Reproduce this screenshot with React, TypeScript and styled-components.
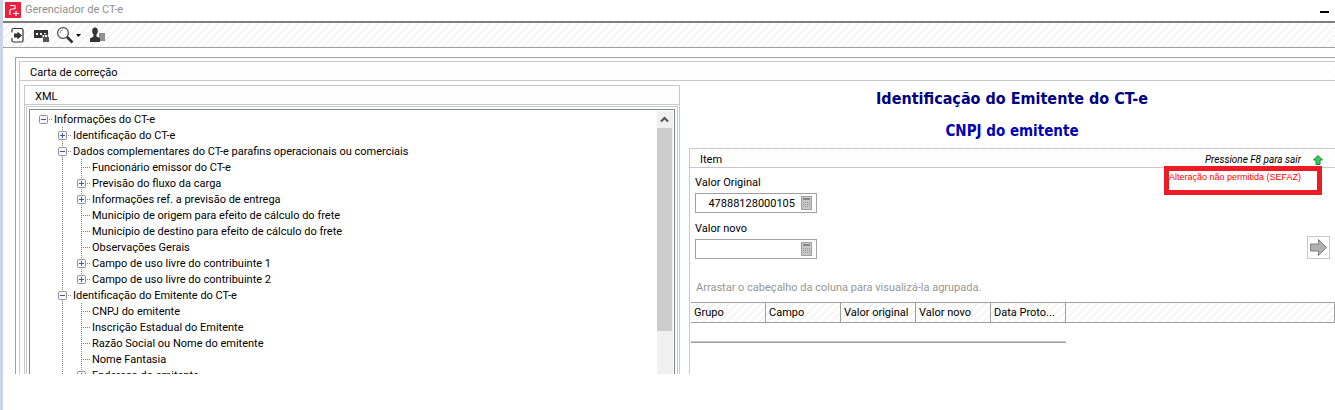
import React from 'react';
import styled, { createGlobalStyle, css } from 'styled-components';

const GlobalStyle = createGlobalStyle`
  *, *::before, *::after { box-sizing: border-box; }
  body { margin: 0; background: #fff; color: #000; }
  body, button, input, table { font-family: Roboto, "Liberation Sans", sans-serif; font-size: 11px; line-height: 16px; }
`;

const hatch = (color: string) => css`
  background-color: #fff;
  background-image: linear-gradient(135deg, transparent 44%, ${color} 44% 56%, transparent 56%);
  background-size: 8px 8px;
`;

const Window = styled.div`
  height: 100vh;
  display: flex;
  flex-direction: column;
  overflow: hidden;
  padding-bottom: 36px;
  border-left: 3px solid #ccd5e8;
`;

const TitleBar = styled.header`
  flex: none;
  height: 21px;
  display: flex;
  align-items: center;
  gap: 4px;
  padding: 0 6px 2px 2px;
`;

const WindowTitle = styled.h1`
  flex: 1;
  margin: 0;
  font-size: 11px;
  line-height: 16px;
  font-weight: 400;
  color: #8f8f8f;
`;

const MinimizeButton = styled.button`
  width: 9px;
  height: 16px;
  padding: 5px 0 0;
  border: 0;
  background: none;
  display: flex;
  align-items: center;
`;

const Toolbar = styled.div`
  flex: none;
  height: 27px;
  display: flex;
  align-items: center;
  gap: 7px;
  padding: 0 6px;
  border-top: 2px solid #7d7d7d;
  border-bottom: 1px solid #a0a0a0;
  ${hatch('#e9e9e9')}
`;

const ToolButton = styled.button<{ $wide?: boolean }>`
  width: ${p => (p.$wide ? 26 : 17)}px;
  height: 17px;
  padding: 0;
  border: 0;
  background: none;
  display: flex;
  align-items: center;
`;

const Workspace = styled.main`
  flex: 1;
  min-height: 0;
  display: flex;
  margin: 9px 0 0 12px;
  padding: 3px 0 0 3px;
  border-top: 1px solid #a0a0a0;
  border-left: 1px solid #a0a0a0;
`;

const CorrectionPanel = styled.section`
  flex: 1;
  min-width: 0;
  display: flex;
  flex-direction: column;
  border-top: 1px solid #c8c8c8;
  border-left: 1px solid #c8c8c8;
`;

const PanelHeader = styled.div`
  flex: none;
  height: 19px;
  display: flex;
  align-items: center;
  padding: 4px 10px 0;
  border-bottom: 1px solid #c8c8c8;
  ${hatch('#f7f7f7')}
`;

const PanelTitle = styled.h2`
  flex: 1;
  margin: 0;
  font-size: 11px;
  line-height: 16px;
  font-weight: 400;
`;

const Columns = styled.div`
  flex: 1;
  min-height: 0;
  display: grid;
  grid-template-columns: minmax(0, 656fr) minmax(0, 646fr);
  grid-template-rows: minmax(0, 1fr);
  gap: 9px;
  padding: 4px 0 0 4px;
`;

const XmlPanel = styled.section`
  display: flex;
  flex-direction: column;
  min-height: 0;
  border: 1px solid #c8c8c8;
  border-bottom: 0;
`;

const TreeFrame = styled.div`
  flex: 1;
  min-height: 0;
  display: flex;
  margin: 1px 1px 0;
  padding: 2px 2px 0;
  border: 1px solid #c8c8c8;
  border-bottom: 0;
`;

const TreeView = styled.div`
  flex: 1;
  min-height: 0;
  display: flex;
  padding: 1px 1px 0 4px;
  border: 1px solid #828790;
  border-bottom: 0;
`;

const TreeList = styled.ul`
  flex: 1;
  margin: 0;
  padding: 0;
  list-style: none;
  overflow: hidden;
`;

const TreeRow = styled.li`
  height: 16px;
  display: flex;
  align-items: center;
  white-space: nowrap;
`;

const Guide = styled.span<{ $line?: boolean; $half?: boolean; $branch?: boolean }>`
  flex: none;
  width: 19px;
  height: 16px;
  display: flex;
  align-items: center;
  justify-content: center;
  background-repeat: no-repeat;
  background-image:
    ${p => (p.$line ? 'repeating-linear-gradient(180deg, #808080 0 1px, transparent 1px 2px)' : 'none')},
    ${p => (p.$branch ? 'repeating-linear-gradient(90deg, #808080 0 1px, transparent 1px 2px)' : 'none')};
  background-size: 1px ${p => (p.$half ? 8 : 16)}px, 9px 1px;
  background-position: 9px 0, 9px 8px;
`;

const Toggle = styled.button`
  width: 9px;
  height: 9px;
  padding: 0;
  border: 0;
  background: none;
  display: flex;
`;

const TreeLabel = styled.span`
  padding: 2px 0 0 1px;
`;

const ScrollBar = styled.div`
  flex: none;
  width: 16px;
  padding-right: 1px;
  display: flex;
  flex-direction: column;
  background: #f0f0f0;
`;

const ScrollUp = styled.button`
  height: 17px;
  padding: 0;
  border: 0;
  background: #f0f0f0;
  display: flex;
  align-items: center;
  justify-content: center;
`;

const ScrollThumb = styled.div`
  height: 77%;
  background: #cdcdcd;
`;

const Detail = styled.div`
  display: flex;
  flex-direction: column;
  min-height: 0;
`;

const Heading = styled.h2`
  margin: 4px 0 0;
  font: bold 16px/20px "DejaVu Sans Condensed", "DejaVu Sans", sans-serif;
  text-align: center;
  color: #000080;
`;

const SubHeading = styled.h3`
  margin: 12px 0 7px;
  font: bold 15px/20px "DejaVu Sans Condensed", "DejaVu Sans", sans-serif;
  text-align: center;
  color: #0000b4;
`;

const ItemPanel = styled.section`
  flex: 1;
  min-height: 0;
  position: relative;
  border-top: 1px solid #c8c8c8;
  border-left: 1px solid #c8c8c8;
`;

const ExitHint = styled.em`
  font-size: 10px;
  margin-right: 12px;
`;

const ExitButton = styled.button`
  width: 12px;
  height: 12px;
  padding: 0;
  border: 0;
  background: none;
  display: flex;
`;

const Notice = styled.p`
  position: absolute;
  top: 17px;
  right: 13px;
  width: 158px;
  height: 29px;
  margin: 0;
  border: 5px solid #ed1c24;
  color: #f00;
  font: 9px/12px "Liberation Sans", Arial, sans-serif;
  white-space: nowrap;
`;

const Form = styled.form`
  display: flex;
  align-items: flex-end;
  justify-content: space-between;
  padding: 7px 5px 0;
`;

const Fields = styled.div`
  display: flex;
  flex-direction: column;
  gap: 8px;
`;

const Field = styled.div`
  display: flex;
  flex-direction: column;
  gap: 2px;
`;

const FieldBox = styled.div`
  width: 122px;
  height: 20px;
  display: flex;
  align-items: center;
  padding-right: 4px;
  border: 1px solid #a0a0a0;
`;

const FieldInput = styled.input`
  flex: 1;
  min-width: 0;
  height: 18px;
  padding: 0 6px;
  border: 0;
  outline: 0;
  background: none;
  text-align: right;
`;

const IconButton = styled.button`
  padding: 0;
  border: 0;
  background: none;
  display: flex;
`;

const ApplyButton = styled.button`
  width: 23px;
  height: 23px;
  padding: 0;
  display: flex;
  align-items: center;
  justify-content: center;
  background: #fff;
  border: 1px solid #c8c8c8;
`;

const GroupHint = styled.p`
  margin: 21px 0 6px;
  padding-left: 6px;
  color: #969696;
`;

const Grid = styled.table`
  width: calc(100% - 1px);
  margin-left: 1px;
  table-layout: fixed;
  border-spacing: 0;
  border-right: 1px solid #a0a0a0;
  ${hatch('#e9e9e9')}
`;

const GridHead = styled.th<{ $rest?: boolean }>`
  width: ${p => (p.$rest ? 'auto' : '75px')};
  height: 21px;
  padding: 0 3px;
  border: solid #a0a0a0;
  border-width: 1px ${p => (p.$rest ? 0 : 1)}px 1px 0;
  overflow: hidden;
  text-overflow: ellipsis;
  white-space: nowrap;
  text-align: left;
  font-weight: 400;
`;

const GridFooter = styled.div`
  width: 375px;
  margin: 18px 0 0 1px;
  border-top: 1px solid #c8c8c8;
  border-bottom: 1px solid #a0a0a0;
`;

const Calculator = () => (
  <svg width="11" height="14" viewBox="0 0 11 14">
    <rect x="0.5" y="0.5" width="10" height="13" fill="#c8c8c8" stroke="#a0a0a0" />
    <rect x="2" y="2" width="7" height="2" fill="#858585" />
    <path d="M2 6h1v1H2zM4 6h1v1H4zM6 6h1v1H6zM8 6h1v1H8zM2 8h1v1H2zM4 8h1v1H4zM6 8h1v1H6zM8 8h1v1H8zM2 10h1v1H2zM4 10h1v1H4zM6 10h1v1H6zM8 10h1v1H8z" fill="#939393" />
  </svg>
);

const nodes: { depth: number; text: string; open?: boolean; last?: boolean }[] = [
  { depth: 0, text: 'Informações do CT-e', open: true, last: true },
  { depth: 1, text: 'Identificação do CT-e', open: false },
  { depth: 1, text: 'Dados complementares do CT-e parafins operacionais ou comerciais', open: true },
  { depth: 2, text: 'Funcionário emissor do CT-e' },
  { depth: 2, text: 'Previsão do fluxo da carga', open: false },
  { depth: 2, text: 'Informações ref. a previsão de entrega', open: false },
  { depth: 2, text: 'Município de origem para efeito de cálculo do frete' },
  { depth: 2, text: 'Município de destino para efeito de cálculo do frete' },
  { depth: 2, text: 'Observações Gerais' },
  { depth: 2, text: 'Campo de uso livre do contribuinte 1', open: false },
  { depth: 2, text: 'Campo de uso livre do contribuinte 2', open: false, last: true },
  { depth: 1, text: 'Identificação do Emitente do CT-e', open: true },
  { depth: 2, text: 'CNPJ do emitente' },
  { depth: 2, text: 'Inscrição Estadual do Emitente' },
  { depth: 2, text: 'Razão Social ou Nome do emitente' },
  { depth: 2, text: 'Nome Fantasia' },
  { depth: 2, text: 'Endereço do emitente', open: false },
];

function NodeRow({ depth, text, open, last }: (typeof nodes)[number]) {
  return (
    <TreeRow>
      {depth > 0 && <Guide />}
      {depth > 1 && <Guide $line />}
      <Guide $line={depth > 0} $half={last} $branch>
        {open !== undefined && (
          <Toggle type="button" aria-label={text} aria-expanded={open}>
            <svg width="9" height="9" viewBox="0 0 9 9">
              <rect x="0.5" y="0.5" width="8" height="8" rx="1" fill="#f6f6f6" stroke="#919191" />
              <path d={open ? 'M2 4.5h5' : 'M2 4.5h5M4.5 2v5'} stroke="#3c5aa0" />
            </svg>
          </Toggle>
        )}
      </Guide>
      <TreeLabel>{text}</TreeLabel>
    </TreeRow>
  );
}

function NumberField({ id, label, value }: { id: string; label: string; value: string }) {
  return (
    <Field>
      <label htmlFor={id}>{label}</label>
      <FieldBox>
        <FieldInput id={id} defaultValue={value} />
        <IconButton type="button" aria-label="Calculadora"><Calculator /></IconButton>
      </FieldBox>
    </Field>
  );
}

export default function App() {
  return (
    <Window>
      <GlobalStyle />
      <TitleBar>
        <svg width="16" height="16" viewBox="0 0 16 16">
          <rect width="16" height="16" fill="#ee1f3d" />
          <path d="M5 3.500H8.500C11 3.500 11 7 8.500 7H7C4.500 7 4.500 10 5 13M8 11.500h6M11 9v5" fill="none" stroke="#fff" strokeWidth="1.200" />
        </svg>
        <WindowTitle>Gerenciador de CT-e</WindowTitle>
        <MinimizeButton type="button" aria-label="Minimizar">
          <svg width="9" height="2"><rect width="9" height="2" fill="#000" /></svg>
        </MinimizeButton>
      </TitleBar>

      <Toolbar role="toolbar">
        <ToolButton type="button" aria-label="Sair">
          <svg width="17" height="17" viewBox="0 0 17 17">
            <path d="M3 5.500V3Q3 1.500 4.500 1.500H12.500Q14 1.500 14 3V13.500Q14 15 12.500 15H4.500Q3 15 3 13.500V11" fill="#fff" stroke="#333" strokeWidth="1.200" />
            <path d="M5 6.500H8.500V4.500L13 8.500L8.500 12.500V10.500H5z" fill="#333" />
          </svg>
        </ToolButton>
        <ToolButton type="button" aria-label="Senha">
          <svg width="17" height="17" viewBox="0 0 17 17">
            <path d="M1 3H15V8H9.500V11H1z" fill="#333" />
            <path d="M3 6h2v2H3zM7 6h2v2H7zM11 6h2v1h-2z" fill="#fff" />
            <rect x="10" y="10" width="6" height="5" fill="#555" />
            <path d="M11.500 10V8.500a1.500 1.500 0 0 1 3 0V10" fill="none" stroke="#555" />
          </svg>
        </ToolButton>
        <ToolButton type="button" aria-label="Pesquisar" $wide>
          <svg width="26" height="17" viewBox="0 0 26 17">
            <circle cx="6" cy="6" r="5.400" fill="#fff" stroke="#444" strokeWidth="1.200" />
            <path d="M3 6a3 3 0 0 1 3-3" fill="none" stroke="#999" />
            <path d="M10 10L15.500 15.500" stroke="#333" strokeWidth="2.600" />
            <path d="M19 7h5l-2.500 3z" fill="#000" />
          </svg>
        </ToolButton>
        <ToolButton type="button" aria-label="Usuário">
          <svg width="17" height="17" viewBox="0 0 17 17">
            <rect x="9" y="6" width="6" height="8" fill="#909090" />
            <ellipse cx="5" cy="4" rx="2.800" ry="3.500" fill="#333" />
            <path d="M3.500 6h3v3.500L10 11v4H-1V12L3.500 9.500z" fill="#333" />
          </svg>
        </ToolButton>
      </Toolbar>

      <Workspace>
        <CorrectionPanel>
          <PanelHeader><PanelTitle>Carta de correção</PanelTitle></PanelHeader>
          <Columns>
            <XmlPanel>
              <PanelHeader><PanelTitle>XML</PanelTitle></PanelHeader>
              <TreeFrame>
                <TreeView>
                  <TreeList>{nodes.map(n => <NodeRow key={n.text} {...n} />)}</TreeList>
                  <ScrollBar>
                    <ScrollUp type="button" aria-label="Rolar para cima">
                      <svg width="9" height="7" viewBox="0 0 9 7"><path d="M1 5.500L4.500 2L8 5.500" fill="none" stroke="#505050" strokeWidth="2" /></svg>
                    </ScrollUp>
                    <ScrollThumb />
                  </ScrollBar>
                </TreeView>
              </TreeFrame>
            </XmlPanel>

            <Detail>
              <Heading>Identificação do Emitente do CT-e</Heading>
              <SubHeading>CNPJ do emitente</SubHeading>
              <ItemPanel>
                <PanelHeader>
                  <PanelTitle>Item</PanelTitle>
                  <ExitHint>Pressione F8 para sair</ExitHint>
                  <ExitButton type="button" aria-label="Sair do item">
                    <svg width="11" height="12" viewBox="0 0 11 12">
                      <path d="M5 1.500L9.500 6H7V10.500H3V6H0.500z" fill="#3cc864" stroke="#0c8a34" />
                    </svg>
                  </ExitButton>
                </PanelHeader>
                <Notice>Alteração não permitida (SEFAZ)</Notice>
                <Form>
                  <Fields>
                    <NumberField id="original" label="Valor Original" value="47888128000105" />
                    <NumberField id="novo" label="Valor novo" value="" />
                  </Fields>
                  <ApplyButton type="button" aria-label="Aplicar">
                    <svg width="17" height="17" viewBox="0 0 17 17">
                      <path d="M0.500 5H8.500V0.500L16.500 8.500L8.500 16.500V12H0.500z" fill="#b0b0b0" stroke="#808080" />
                    </svg>
                  </ApplyButton>
                </Form>
                <GroupHint>Arrastar o cabeçalho da coluna para visualizá-la agrupada.</GroupHint>
                <Grid>
                  <thead>
                    <tr>
                      <GridHead>Grupo</GridHead>
                      <GridHead>Campo</GridHead>
                      <GridHead>Valor original</GridHead>
                      <GridHead>Valor novo</GridHead>
                      <GridHead>Data Proto...</GridHead>
                      <GridHead $rest />
                    </tr>
                  </thead>
                </Grid>
                <GridFooter />
              </ItemPanel>
            </Detail>
          </Columns>
        </CorrectionPanel>
      </Workspace>
    </Window>
  );
}
